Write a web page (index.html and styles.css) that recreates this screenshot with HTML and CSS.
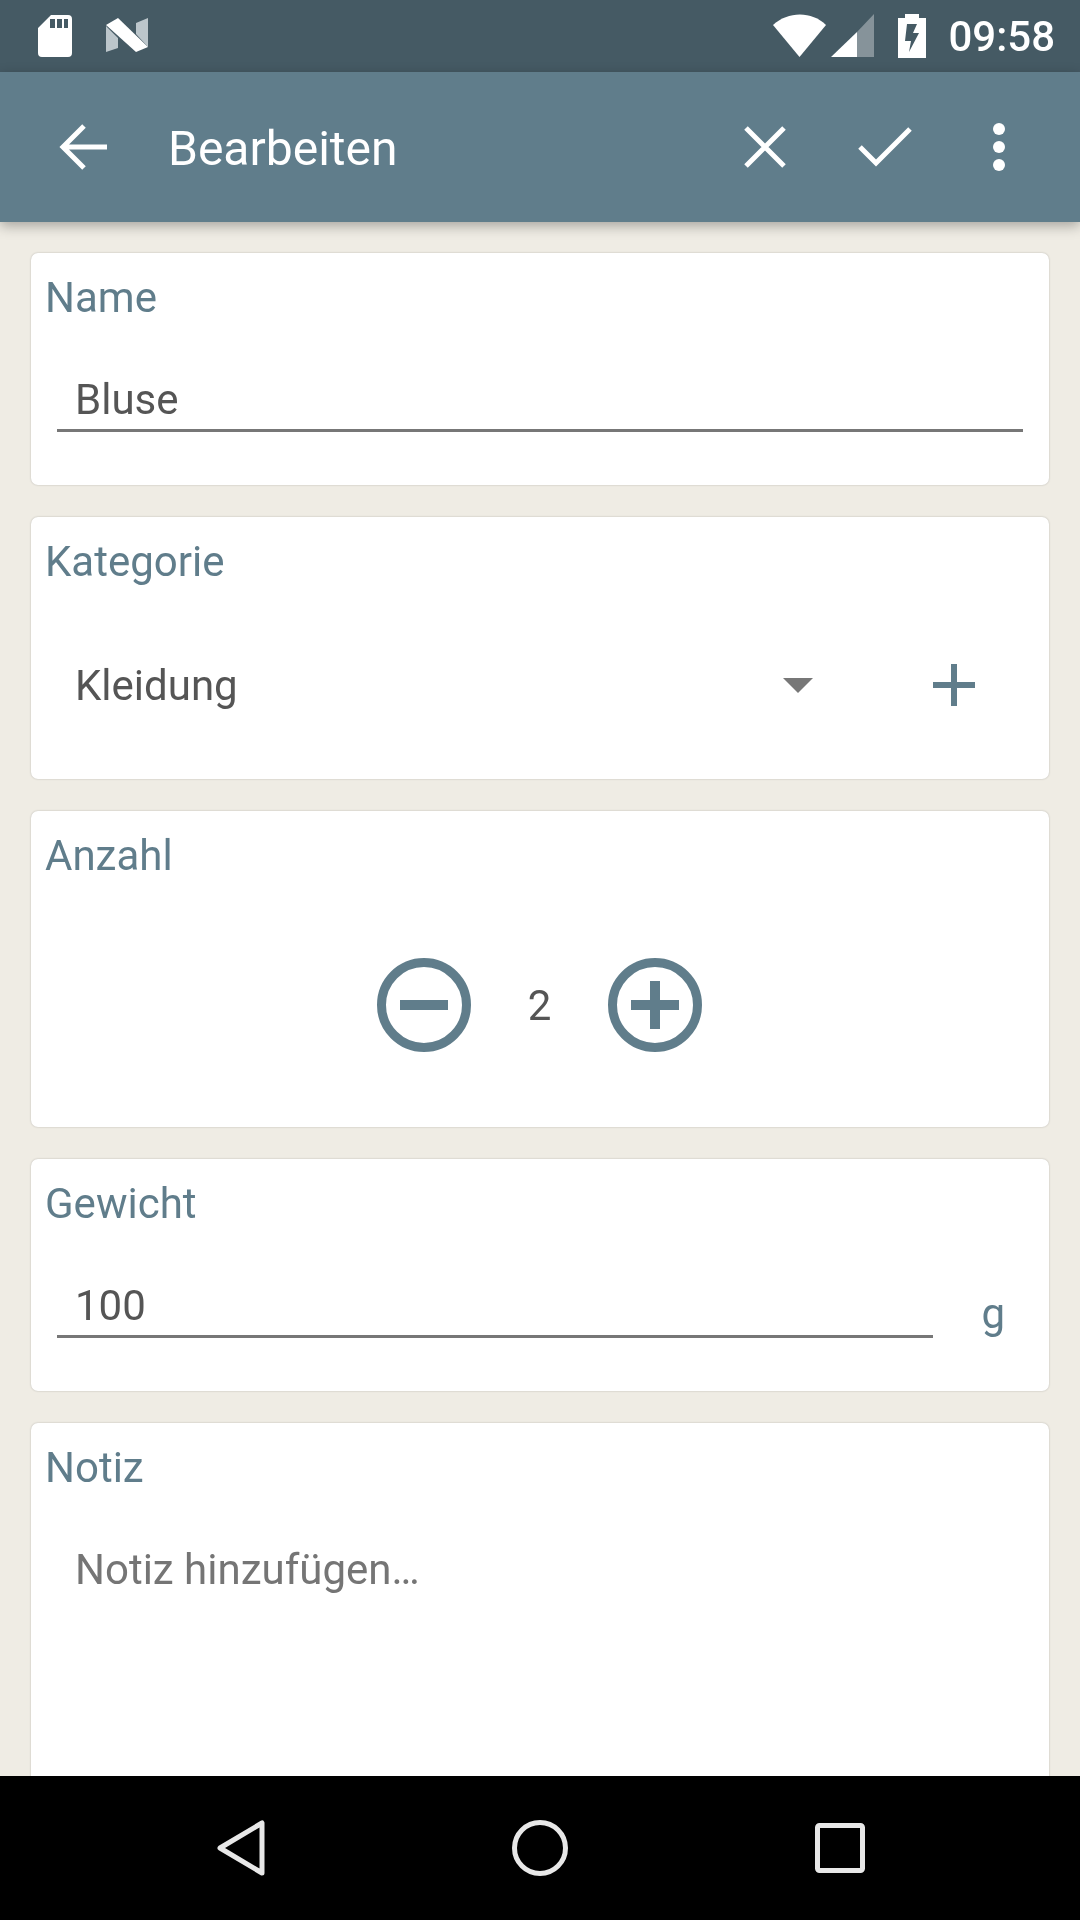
FILE: index.html
```html
<!DOCTYPE html>
<html lang="de">
<head>
    <meta charset="UTF-8">
    <meta name="viewport" content="width=device-width, initial-scale=1.0">
    <title>Bearbeiten</title>
    <link rel="stylesheet" href="styles.css">
</head>
<body>

    <div class="screen">
        <div class="status-bar">
            <div class="status-left">
                <svg class="icon-sd" width="36" height="44" viewBox="0 0 36 44">
                    <path fill="#fff" fill-rule="evenodd" d="M14 1H31a4 4 0 0 1 4 4V39a4 4 0 0 1-4 4H5a4 4 0 0 1-4-4V14ZM13 5V14H18V5ZM20 5V14H25V5ZM27 5V14H31V5Z"/>
                </svg>
                <svg class="icon-n" width="44" height="38" viewBox="0 0 44 38">
                    <path fill="#bcc6cb" d="M1 9L1 35L13 31L13 21ZM31 6L43 1V30L31 17Z"/>
                    <path fill="#fff" d="M1 8L13 1L43 30L31 35Z"/>
                </svg>
            </div>
            <div class="status-right">
                <svg class="icon-wifi" width="54" height="44" viewBox="0 0 54 44">
                    <path fill="#fff" d="M0 11C15 -3 39 -3 53 11L26.500 43Z"/>
                </svg>
                <svg class="icon-signal" width="44" height="44" viewBox="0 0 44 44">
                    <path fill="#fff" fill-opacity=".35" d="M43 0V43H26V18Z"/>
                    <path fill="#fff" d="M26 18V43H0Z"/>
                </svg>
                <svg class="icon-battery" width="28" height="44" viewBox="0 0 28 44">
                    <path fill="#fff" fill-rule="evenodd" d="M7 0H21V4H28V44H0V4H7ZM9 10L7 27H13L11 38L21 19H15L19 10Z"/>
                </svg>
                <span class="clock">09:58</span>
            </div>
        </div>

        <div class="app-bar">
            <svg class="back" width="48" height="48" viewBox="0 0 48 48">
                <path fill="none" stroke="#fff" stroke-width="5" d="M48 24H4M25 3L4 24L25 45"/>
            </svg>
            <span class="app-title">Bearbeiten</span>
            <div class="actions">
                <svg width="42" height="42" viewBox="0 0 42 42">
                    <path fill="none" stroke="#fff" stroke-width="5" d="M2 2L40 40M40 2L2 40"/>
                </svg>
                <svg class="check" width="54" height="42" viewBox="0 0 54 42">
                    <path fill="none" stroke="#fff" stroke-width="5" d="M2 21L18 37L52 3"/>
                </svg>
                <svg class="more" width="12" height="48" viewBox="0 0 12 48">
                    <circle cx="6" cy="6" r="6" fill="#fff"/>
                    <circle cx="6" cy="24" r="6" fill="#fff"/>
                    <circle cx="6" cy="42" r="6" fill="#fff"/>
                </svg>
            </div>
        </div>

        <div class="content">
            <div class="card card-name">
                <div class="card-label">Name</div>
                <div class="field">Bluse</div>
            </div>

            <div class="card card-category">
                <div class="card-label">Kategorie</div>
                <div class="spinner-row">
                    <span class="spinner-value">Kleidung</span>
                    <span class="spinner-arrow"></span>
                    <svg class="add" width="42" height="42" viewBox="0 0 42 42">
                        <path fill="#607d8b" d="M18 0H24V18H42V24H24V42H18V24H0V18H18Z"/>
                    </svg>
                </div>
            </div>

            <div class="card card-count">
                <div class="card-label">Anzahl</div>
                <div class="stepper">
                    <svg width="94" height="94" viewBox="0 0 94 94">
                        <circle cx="47" cy="47" r="42.500" fill="none" stroke="#607d8b" stroke-width="9"/>
                        <rect x="23" y="42" width="48" height="10" fill="#607d8b"/>
                    </svg>
                    <span class="count">2</span>
                    <svg width="94" height="94" viewBox="0 0 94 94">
                        <circle cx="47" cy="47" r="42.500" fill="none" stroke="#607d8b" stroke-width="9"/>
                        <path fill="#607d8b" d="M42 23H52V42H71V52H52V71H42V52H23V42H42Z"/>
                    </svg>
                </div>
            </div>

            <div class="card card-weight">
                <div class="card-label">Gewicht</div>
                <div class="weight-row">
                    <div class="field field-weight">100</div>
                    <span class="unit">g</span>
                </div>
            </div>

            <div class="card card-note">
                <div class="card-label">Notiz</div>
                <div class="note-hint">Notiz hinzufügen…</div>
            </div>
        </div>

        <div class="nav-bar">
            <svg width="48" height="56" viewBox="0 0 48 56">
                <path fill="none" stroke="#e8e8e8" stroke-width="5" stroke-linejoin="round" d="M45 3V53L3 28Z"/>
            </svg>
            <svg width="56" height="56" viewBox="0 0 56 56">
                <circle cx="28" cy="28" r="25.500" fill="none" stroke="#e8e8e8" stroke-width="5"/>
            </svg>
            <svg width="50" height="50" viewBox="0 0 50 50">
                <rect x="2.500" y="2.500" width="45" height="45" rx="2" fill="none" stroke="#e8e8e8" stroke-width="5"/>
            </svg>
        </div>
    </div>

</body>
</html>
```

FILE: styles.css
```css
body {
    margin: 0;
    font-family: Roboto, "Noto Sans", sans-serif;
    background-color: #efece4;
}

.screen {
    width: 1080px;
    height: 1920px;
    display: flex;
    flex-direction: column;
    overflow: hidden;
    will-change: transform;
}

.status-bar {
    height: 72px;
    flex-shrink: 0;
    background-color: #455a64;
    display: flex;
    align-items: center;
    justify-content: space-between;
    padding: 0 25px 0 37px;
    box-sizing: border-box;
}

.status-left {
    display: flex;
    align-items: center;
    gap: 32px;
}

.status-right {
    display: flex;
    align-items: center;
}

.icon-signal {
    margin-left: 4px;
}

.icon-battery {
    margin-left: 23px;
}

.clock {
    margin-left: 22px;
    font-size: 42px;
    font-weight: 500;
    color: #fff;
}

.app-bar {
    height: 150px;
    flex-shrink: 0;
    background-color: #607d8b;
    display: flex;
    align-items: center;
    padding: 0 75px 0 59px;
    box-sizing: border-box;
    color: #fff;
    box-shadow: 0 4px 12px rgba(0,0,0,0.3);
    position: relative;
}

.app-title {
    margin-left: 61px;
    padding-top: 2px;
    font-size: 48px;
}

.actions {
    margin-left: auto;
    display: flex;
    align-items: center;
}

.check {
    margin-left: 72px;
}

.more {
    margin-left: 81px;
}

.content {
    flex: 1;
    min-height: 0;
    overflow: hidden;
    padding: 31px 31px 0;
    display: flex;
    flex-direction: column;
    gap: 32px;
}

.card {
    flex-shrink: 0;
    box-sizing: border-box;
    background-color: #fff;
    border-radius: 7px;
    box-shadow: 0 0 2px rgba(0,0,0,0.25);
    padding: 20px 26px 0 14px;
}

.card-label {
    font-size: 42px;
    line-height: 49px;
    color: #607d8b;
}

.card-name {
    height: 232px;
}

.card-category {
    height: 262px;
}

.card-count {
    height: 316px;
}

.card-weight {
    height: 232px;
}

.card-note {
    height: 400px;
}

.field {
    margin: 53px 0 0 12px;
    padding: 0 0 5px 18px;
    border-bottom: 3px solid #777;
    font-size: 42px;
    line-height: 49px;
    color: #555;
}

.spinner-row {
    display: flex;
    align-items: center;
    margin-top: 69px;
    padding-left: 30px;
    height: 60px;
}

.spinner-value {
    font-size: 42px;
    color: #555;
}

.spinner-arrow {
    margin-left: auto;
    width: 0;
    height: 0;
    border-left: 15px solid transparent;
    border-right: 15px solid transparent;
    border-top: 15px solid #777;
}

.add {
    margin: 0 48px 0 120px;
}

.stepper {
    display: flex;
    align-items: center;
    justify-content: center;
    gap: 57px;
    margin-top: 78px;
    padding-left: 11px;
}

.count {
    font-size: 42px;
    color: #555;
}

.weight-row {
    display: flex;
    align-items: flex-start;
}

.field-weight {
    flex: 1;
}

.unit {
    margin: 61px 18px 0 48px;
    font-size: 42px;
    color: #607d8b;
}

.note-hint {
    margin: 53px 0 0 30px;
    font-size: 42px;
    line-height: 49px;
    color: #757575;
}

.nav-bar {
    height: 144px;
    flex-shrink: 0;
    background-color: #000;
    display: flex;
    align-items: center;
    justify-content: space-between;
    padding: 0 215px 0 217px;
    box-sizing: border-box;
}
```
